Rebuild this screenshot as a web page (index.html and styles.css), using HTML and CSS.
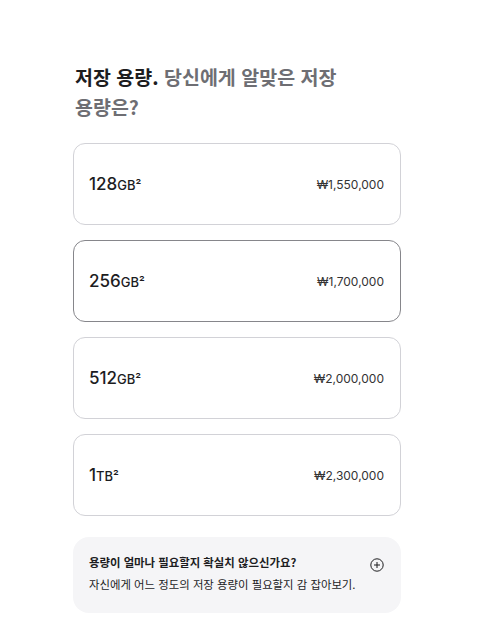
FILE: index.html
```html
<!DOCTYPE html>
<html lang="ko">
<head>
<meta charset="utf-8">
<link rel="stylesheet" href="styles.css">
</head>
<body>
<main class="page">
  <h2 class="heading"><span class="strong">저장 용량.</span> <span class="soft">당신에게 알맞은 저장</span> <span class="soft">용량은?</span></h2>
  <ul class="options">
    <li class="option"><span class="size">128<span class="unit">GB²</span></span><span class="price">₩1,550,000</span></li>
    <li class="option selected"><span class="size">256<span class="unit">GB²</span></span><span class="price">₩1,700,000</span></li>
    <li class="option"><span class="size">512<span class="unit">GB²</span></span><span class="price">₩2,000,000</span></li>
    <li class="option"><span class="size">1<span class="unit">TB²</span></span><span class="price">₩2,300,000</span></li>
  </ul>
  <div class="help">
    <div class="help-text">
      <p class="help-title">용량이 얼마나 필요할지 확실치 않으신가요?</p>
      <p class="help-desc">자신에게 어느 정도의 저장 용량이 필요할지 감 잡아보기.</p>
    </div>
    <svg class="plus" width="14" height="14" viewBox="0 0 14 14"><circle cx="7" cy="7" r="6.2" fill="none" stroke="#1d1d1f" stroke-width="1"/><path d="M7 4v6M4 7h6" stroke="#1d1d1f" stroke-width="1"/></svg>
  </div>
</main>
</body>
</html>
```
FILE: styles.css
```css
* { box-sizing: border-box; }
html, body { margin: 0; padding: 0; background: #fff; }
body {
  font-family: "Noto Sans", "Noto Sans CJK KR", sans-serif;
  color: #1d1d1f;
}
.page {
  width: 328px;
  margin-left: 73px;
  padding-top: 62px;
}
.heading {
  margin: 0 0 21px 2px;
  font-family: "Noto Sans CJK KR", sans-serif;
  font-size: 19.5px;
  line-height: 30px;
  font-weight: 700;
  color: #6e6e73;
  width: 275px;
}
.heading .strong { color: #1d1d1f; }
.heading .soft { color: #6e6e73; }
.options {
  list-style: none;
  margin: 0;
  padding: 0;
  display: flex;
  flex-direction: column;
  gap: 15px;
}
.option {
  height: 82px;
  border: 1px solid #d2d2d7;
  border-radius: 12px;
  display: flex;
  align-items: center;
  justify-content: space-between;
  padding: 0 16px 0 15px;
}
.option.selected { border-color: #86868b; }
.size {
  font-family: Inter, "Liberation Sans", sans-serif;
  font-size: 17px;
  font-weight: 500;
  color: #1d1d1f;
}
.unit { font-size: 13px; }
.price {
  font-family: Inter, "Liberation Sans", sans-serif;
  font-size: 12px;
  color: #333;
}
.help {
  margin-top: 21px;
  background: #f5f5f7;
  border-radius: 16px;
  padding: 17px 16px 21px 16px;
  display: flex;
  justify-content: space-between;
  align-items: flex-start;
}
.help p { margin: 0; font-family: "Noto Sans CJK KR", sans-serif; }
.help-title { font-size: 11.4px; font-weight: 700; line-height: 16px; }
.help-desc { font-size: 11.4px; line-height: 16px; margin-top: 6px !important; color: #1d1d1f; }
.plus { margin-top: 4px; margin-right: 1px; }
```
